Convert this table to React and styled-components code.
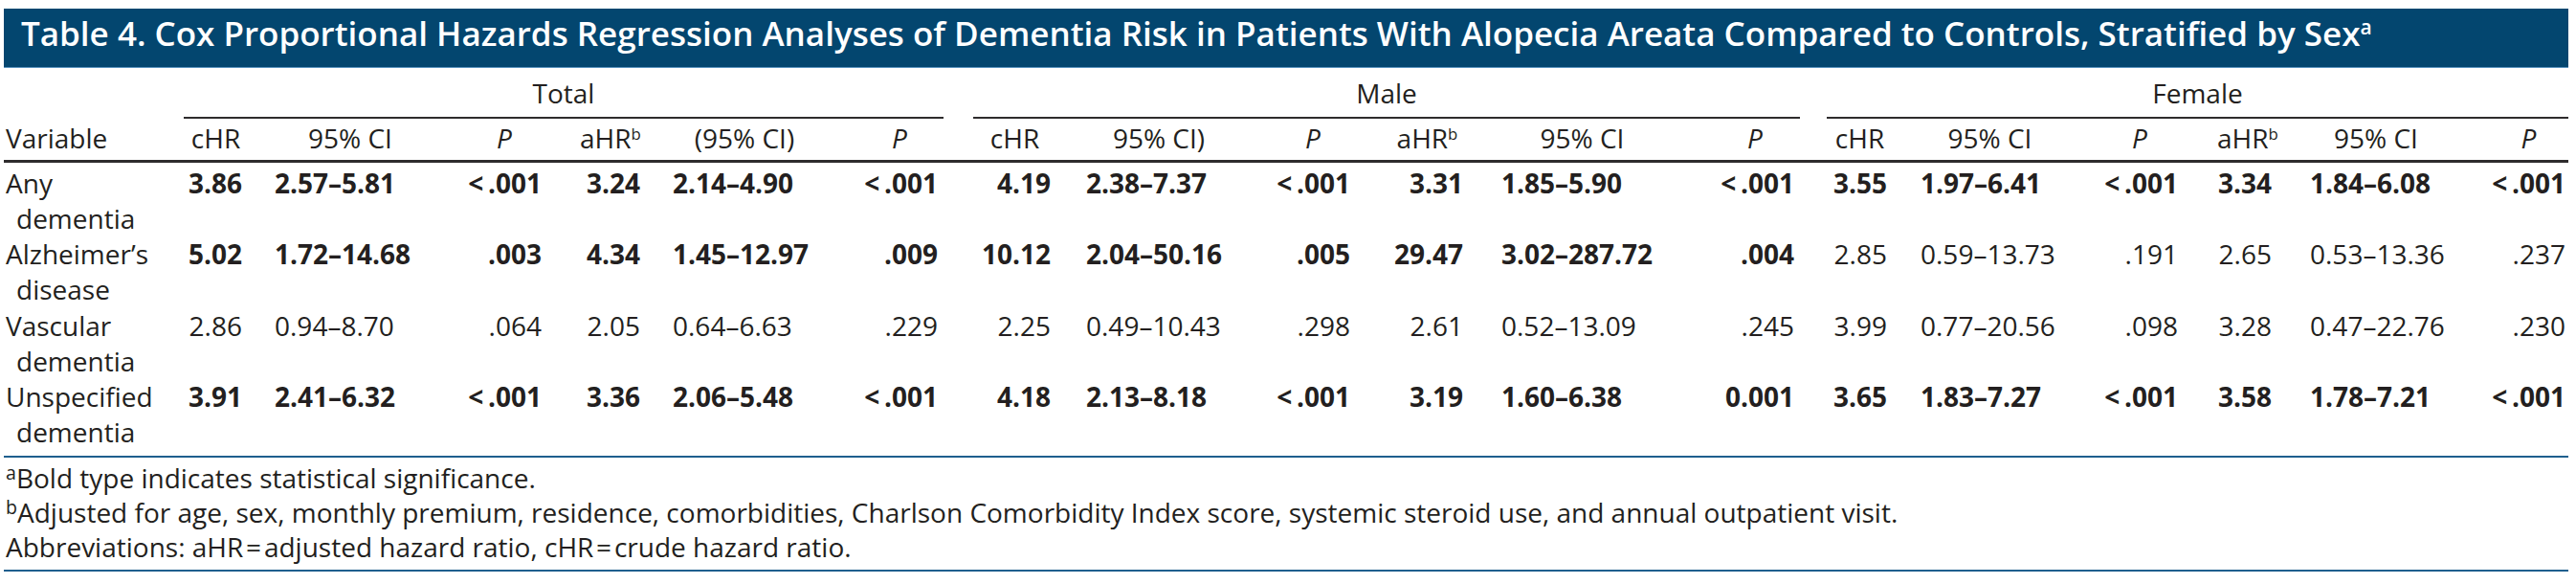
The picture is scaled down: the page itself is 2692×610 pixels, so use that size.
import React from "react";
import styled, { createGlobalStyle } from "styled-components";

const Global = createGlobalStyle`
  html, body { margin: 0; padding: 0; background: #ffffff; }
  body { font-family: "Open Sans", "Liberation Sans", Arial, sans-serif; color: #231f20; }
`;

/* content extents [start, end] of each data column, measured in page px */
const COLS = [
  { s: 198, e: 253, a: "right" },
  { s: 287, e: 445, a: "left" },
  { s: 488, e: 566, a: "right" },
  { s: 606, e: 669, a: "right" },
  { s: 703, e: 853, a: "left" },
  { s: 900, e: 980, a: "right" },
  { s: 1023, e: 1098, a: "right" },
  { s: 1135, e: 1287, a: "left" },
  { s: 1333, e: 1411, a: "right" },
  { s: 1454, e: 1529, a: "right" },
  { s: 1569, e: 1738, a: "left" },
  { s: 1793, e: 1875, a: "right" },
  { s: 1915, e: 1972, a: "right" },
  { s: 2007, e: 2152, a: "left" },
  { s: 2196, e: 2276, a: "right" },
  { s: 2317, e: 2374, a: "right" },
  { s: 2414, e: 2552, a: "left" },
  { s: 2604, e: 2681, a: "right" },
];

const LEFT = 4;
const RIGHT = 2684;
const VAR_END = 192;

const BOUNDS = [LEFT, VAR_END];
for (let i = 0; i < COLS.length - 1; i++) {
  BOUNDS.push(Math.round((COLS[i].e + COLS[i + 1].s) / 2));
}
BOUNDS.push(RIGHT);
const TRACKS = BOUNDS.slice(1).map((b, i) => `${b - BOUNDS[i]}px`).join(" ");

const colPad = (i) => ({
  pl: COLS[i].s - BOUNDS[i + 1],
  pr: BOUNDS[i + 2] - COLS[i].e,
});

const GROUPS = [
  { name: "Total", headers: ["cHR", "95% CI", "P", "aHR", "(95% CI)", "P"] },
  { name: "Male", headers: ["cHR", "95% CI)", "P", "aHR", "95% CI", "P"] },
  { name: "Female", headers: ["cHR", "95% CI", "P", "aHR", "95% CI", "P"] },
];

const LT = "<\u2009.001";

const ROWS = [
  {
    first: "Any",
    second: "dementia",
    values: [
      ["3.86", 1], ["2.57–5.81", 1], [LT, 1], ["3.24", 1], ["2.14–4.90", 1], [LT, 1],
      ["4.19", 1], ["2.38–7.37", 1], [LT, 1], ["3.31", 1], ["1.85–5.90", 1], [LT, 1],
      ["3.55", 1], ["1.97–6.41", 1], [LT, 1], ["3.34", 1], ["1.84–6.08", 1], [LT, 1],
    ],
  },
  {
    first: "Alzheimer’s",
    second: "disease",
    values: [
      ["5.02", 1], ["1.72–14.68", 1], [".003", 1], ["4.34", 1], ["1.45–12.97", 1], [".009", 1],
      ["10.12", 1], ["2.04–50.16", 1], [".005", 1], ["29.47", 1], ["3.02–287.72", 1], [".004", 1],
      ["2.85", 0], ["0.59–13.73", 0], [".191", 0], ["2.65", 0], ["0.53–13.36", 0], [".237", 0],
    ],
  },
  {
    first: "Vascular",
    second: "dementia",
    values: [
      ["2.86", 0], ["0.94–8.70", 0], [".064", 0], ["2.05", 0], ["0.64–6.63", 0], [".229", 0],
      ["2.25", 0], ["0.49–10.43", 0], [".298", 0], ["2.61", 0], ["0.52–13.09", 0], [".245", 0],
      ["3.99", 0], ["0.77–20.56", 0], [".098", 0], ["3.28", 0], ["0.47–22.76", 0], [".230", 0],
    ],
  },
  {
    first: "Unspecified",
    second: "dementia",
    values: [
      ["3.91", 1], ["2.41–6.32", 1], [LT, 1], ["3.36", 1], ["2.06–5.48", 1], [LT, 1],
      ["4.18", 1], ["2.13–8.18", 1], [LT, 1], ["3.19", 1], ["1.60–6.38", 1], ["0.001", 1],
      ["3.65", 1], ["1.83–7.27", 1], [LT, 1], ["3.58", 1], ["1.78–7.21", 1], [LT, 1],
    ],
  },
];

/* ---------- styled parts ---------- */

const Page = styled.div`
  padding: 9px 8px 0 ${LEFT}px;
  width: ${RIGHT - LEFT}px;
`;

const TitleBar = styled.div`
  box-sizing: border-box;
  height: 62px;
  background: #03466f;
  border-bottom: 1px solid #5a93bf;
  padding: 6px 0 0 18px;
`;

const TitleText = styled.h1`
  margin: 0;
  font-size: 35px;
  font-weight: 600;
  line-height: 40px;
  color: #ffffff;
  white-space: nowrap;
`;

const Sup = styled.sup`
  font-size: ${(p) => p.$size || "0.6em"};
  line-height: 0;
  vertical-align: ${(p) => p.$raise || "0.55em"};
`;

const Grid = styled.div`
  display: grid;
  grid-template-columns: ${(p) => p.$tracks};
  font-size: 28px;
`;

const Blank = styled.div``;

const SpanCell = styled.div`
  grid-column: span 6;
  margin-left: ${(p) => p.$ml}px;
  margin-right: ${(p) => p.$mr}px;
  padding: 8px 0 6px;
  line-height: 37px;
  text-align: center;
  border-bottom: 2px solid #2e2c2d;
`;

const HeadCell = styled.div`
  text-align: ${(p) => p.$align || "center"};
  padding: 2px ${(p) => p.$pr}px 4px ${(p) => p.$pl}px;
  margin-bottom: 2.5px;
  line-height: 37px;
  white-space: nowrap;
  border-bottom: 3px solid #2e2c2d;
  font-style: ${(p) => (p.$italic ? "italic" : "normal")};
`;

const VarCell = styled.div`
  padding-left: 2px;
  line-height: 37.25px;
  white-space: nowrap;
`;

const VarLine = styled.div`
  padding-left: ${(p) => (p.$cont ? 11 : 0)}px;
`;

const ValCell = styled.div`
  display: flex;
  justify-content: ${(p) => (p.$align === "left" ? "flex-start" : "flex-end")};
  align-items: flex-start;
  padding: 0 ${(p) => p.$pr}px 0 ${(p) => p.$pl}px;
  line-height: 37.25px;
  white-space: nowrap;
  font-weight: ${(p) => (p.$bold ? 700 : 400)};
`;

const Notes = styled.div`
  margin-top: 5.5px;
  border-top: 2.5px solid #1f5f8e;
  border-bottom: 2.5px solid #1f5f8e;
  padding: 2.5px 0 6px 2px;
  font-size: 28px;
  line-height: 36px;
`;

const Note = styled.p`
  margin: 0;
  white-space: nowrap;
`;

/* ---------- component ---------- */

function Header({ text, idx }) {
  const { pl, pr } = colPad(idx);
  const italic = text === "P";
  return (
    <HeadCell $pl={pl} $pr={pr} $italic={italic}>
      {text}
      {text === "aHR" && <Sup>b</Sup>}
    </HeadCell>
  );
}

const EQ = "\u200A=\u200A";

export default function App() {
  return (
    <>
      <Global />
      <Page>
        <TitleBar>
          <TitleText>
            Table 4. Cox Proportional Hazards Regression Analyses of Dementia Risk in Patients With Alopecia
            Areata Compared to Controls, Stratified by Sex<Sup>a</Sup>
          </TitleText>
        </TitleBar>

        <Grid $tracks={TRACKS}>
          <Blank />
          {GROUPS.map((g, gi) => {
            const first = gi * 6;
            const last = first + 5;
            const trackStart = BOUNDS[first + 1];
            const trackEnd = BOUNDS[last + 2];
            const ml = Math.max(0, COLS[first].s - 6 - trackStart);
            const mr = Math.max(0, trackEnd - (COLS[last].e + 6));
            return (
              <SpanCell key={g.name} $ml={ml} $mr={mr}>
                {g.name}
              </SpanCell>
            );
          })}

          <HeadCell $align="left" $pl={2} $pr={0}>
            Variable
          </HeadCell>
          {GROUPS.flatMap((g, gi) =>
            g.headers.map((h, hi) => <Header key={`${g.name}-${hi}`} text={h} idx={gi * 6 + hi} />)
          )}

          {ROWS.map((r) => (
            <React.Fragment key={r.first}>
              <VarCell>
                <VarLine>{r.first}</VarLine>
                <VarLine $cont>{r.second}</VarLine>
              </VarCell>
              {r.values.map(([v, b], i) => {
                const { pl, pr } = colPad(i);
                return (
                  <ValCell key={i} $align={COLS[i].a} $pl={pl} $pr={pr} $bold={!!b}>
                    {v}
                  </ValCell>
                );
              })}
            </React.Fragment>
          ))}
        </Grid>

        <Notes>
          <Note>
            <Sup $size="0.7em" $raise="0.45em">a</Sup>Bold type indicates statistical significance.
          </Note>
          <Note>
            <Sup $size="0.7em" $raise="0.45em">b</Sup>Adjusted for age, sex, monthly premium, residence, comorbidities,
            Charlson Comorbidity Index score, systemic steroid use, and annual outpatient visit.
          </Note>
          <Note>
            Abbreviations: aHR{EQ}adjusted hazard ratio, cHR{EQ}crude hazard ratio.
          </Note>
        </Notes>
      </Page>
    </>
  );
}
